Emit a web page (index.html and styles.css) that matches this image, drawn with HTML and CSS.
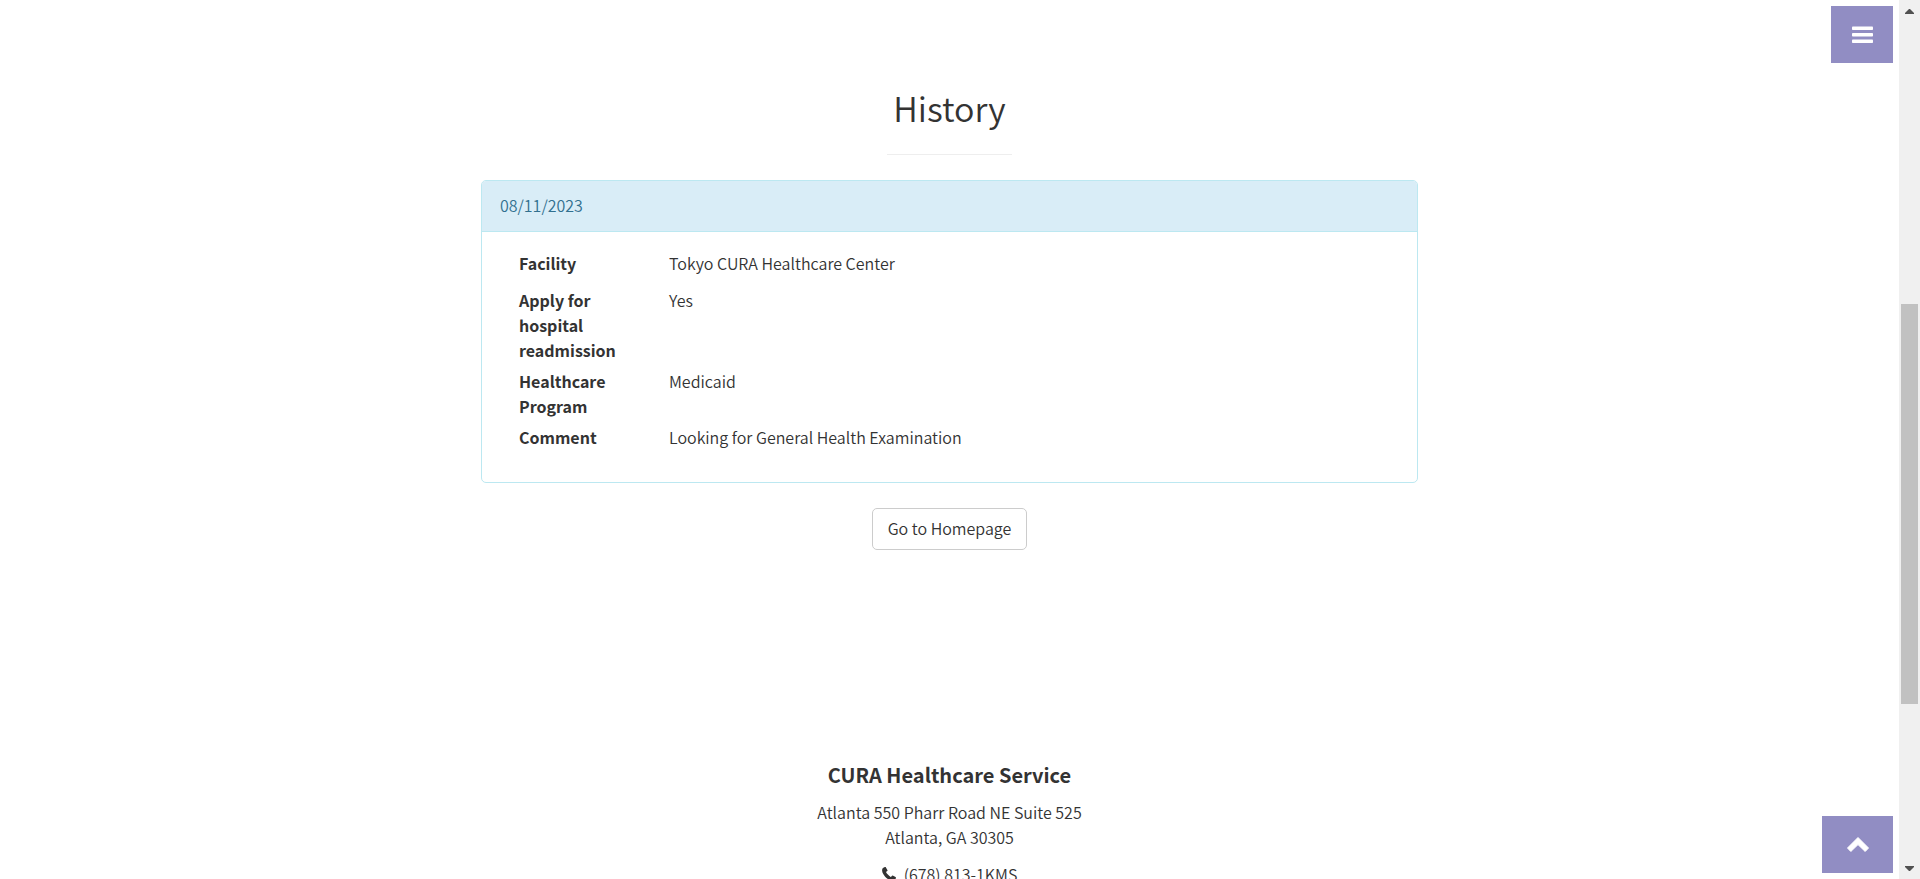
FILE: index.html
```html
<!DOCTYPE html>
<html lang="en">
<head>
<meta charset="utf-8">
<title>CURA Healthcare Service</title>
<link rel="stylesheet" href="styles.css">
</head>
<body>
<div class="page">
  <main class="history">
    <h2 class="history-title">History</h2>
    <hr class="divider">
    <section class="panel">
      <div class="panel-heading">08/11/2023</div>
      <dl class="panel-body">
        <div class="row"><dt>Facility</dt><dd>Tokyo CURA Healthcare Center</dd></div>
        <div class="row"><dt>Apply for hospital readmission</dt><dd>Yes</dd></div>
        <div class="row"><dt>Healthcare Program</dt><dd>Medicaid</dd></div>
        <div class="row"><dt>Comment</dt><dd>Looking for General Health Examination</dd></div>
      </dl>
    </section>
    <a class="home-link" href="#home">Go to Homepage</a>
  </main>
  <footer class="footer">
    <h4 class="footer-title">CURA Healthcare Service</h4>
    <p class="address">Atlanta 550 Pharr Road NE Suite 525<br>Atlanta, GA 30305</p>
    <p class="phone"><svg class="phone-icon" viewBox="0 0 14 14" aria-hidden="true"><path d="M3.1 0.1C2 0.4.6 1 .3 2.1c-.5 1.600 0 3.200.8 4.600 1.400 2.600 3.600 4.800 6.200 6.200 1.400.8 3 1.300 4.600.8 1.100-.3 1.700-1.700 2-2.800.1-.5 0-.6-.4-.8L10.700 8.500c-.7-.4-1.300 1.500-2 1.400C7.300 9.300 4.700 6.700 4.100 5.300c-.1-.7 1.800-1.300 1.400-2L3.900.5C3.700.1 3.600 0 3.100.1z"/></svg>(678) 813-1KMS</p>
  </footer>
</div>
<div class="scrollbar" aria-hidden="true">
  <svg class="arrow" viewBox="0 0 9 5"><path d="M4 0h1l4 4v1H0V4z"/></svg>
  <div class="track"><div class="thumb"></div></div>
  <svg class="arrow" viewBox="0 0 9 5"><path d="M0 0h9v1L5 5H4L0 1z"/></svg>
</div>
<button class="float-button menu-button" type="button" aria-label="Menu">
  <svg viewBox="0 0 21 19" width="21" height="19"><rect y="1.400" width="21" height="3.600" rx="0.800"/><rect y="8" width="21" height="3.600" rx="0.800"/><rect y="14.400" width="21" height="3.600" rx="0.800"/></svg>
</button>
<a class="float-button top-button" href="#top" aria-label="Back to top">
  <svg viewBox="0 0 22 15" width="22" height="15"><path d="M11 .5L21.500 11 18.200 14.500 11 7.600 3.800 14.500.5 11z" stroke="#fff" stroke-linejoin="round"/></svg>
</a>
</body>
</html>
```
FILE: styles.css
```css
* { box-sizing: border-box; }

body {
  display: flex;
  height: 100vh;
  margin: 0;
  overflow: hidden;
  background: #fff;
  color: #333;
  font-family: "Source Sans Pro", "Noto Sans CJK SC", sans-serif;
  font-size: 16px;
  font-weight: 350;
  line-height: 25px;
}

.page { flex: 1; }

.history {
  display: flex;
  flex-direction: column;
  align-items: center;
  padding: 88px 16px 0;
}

.history-title {
  margin: 0;
  font-size: 34px;
  font-weight: 350;
  line-height: 40px;
}

.divider {
  width: 125px;
  margin: 26px 0 25px;
  border: 0;
  border-top: 1px solid #eee;
}

.panel {
  width: 100%;
  max-width: 937px;
  border: 1px solid #bce8f1;
  border-radius: 5px;
  overflow: hidden;
}

.panel-heading {
  padding: 12px 18px 13px;
  border-bottom: 1px solid #bce8f1;
  background: #d9edf7;
  color: #31708f;
}

.panel-body {
  margin: 0;
  padding: 19px 37px 20px;
}

.row {
  display: grid;
  grid-template-columns: 120px 1fr;
  column-gap: 30px;
}

dt {
  margin-bottom: 6px;
  font-weight: 700;
}

dd { margin: 0 0 12px; }

.home-link {
  margin-top: 25px;
  padding: 7px 15px 8px;
  border: 1px solid #ccc;
  border-radius: 5px;
  color: #333;
  text-decoration: none;
}

.footer {
  padding-top: 212px;
  text-align: center;
}

.footer-title {
  margin: 0 0 13px;
  font-size: 20px;
  font-weight: 700;
  line-height: 25px;
}

.address, .phone { margin: 0 0 12px; }

.phone-icon {
  width: 14px;
  height: 14px;
  margin-right: 8px;
  fill: #333;
}

.scrollbar {
  display: flex;
  flex-direction: column;
  align-items: center;
  width: 21px;
  padding: 9px 0 8px;
  background: #f0f0f0;
}

.arrow {
  width: 9px;
  height: 5px;
  fill: #505050;
}

.track {
  flex: 1;
  width: 17px;
  padding-top: 290px;
}

.thumb {
  height: 400px;
  background: #c1c1c1;
}

.float-button {
  position: fixed;
  right: 27px;
  display: flex;
  align-items: center;
  justify-content: center;
  height: 57px;
  padding: 0;
  border: 0;
  background: #918dc3;
}

.float-button svg { fill: #fff; }

.menu-button { top: 6px; width: 62px; }

.top-button { bottom: 6px; width: 71px; }
```
